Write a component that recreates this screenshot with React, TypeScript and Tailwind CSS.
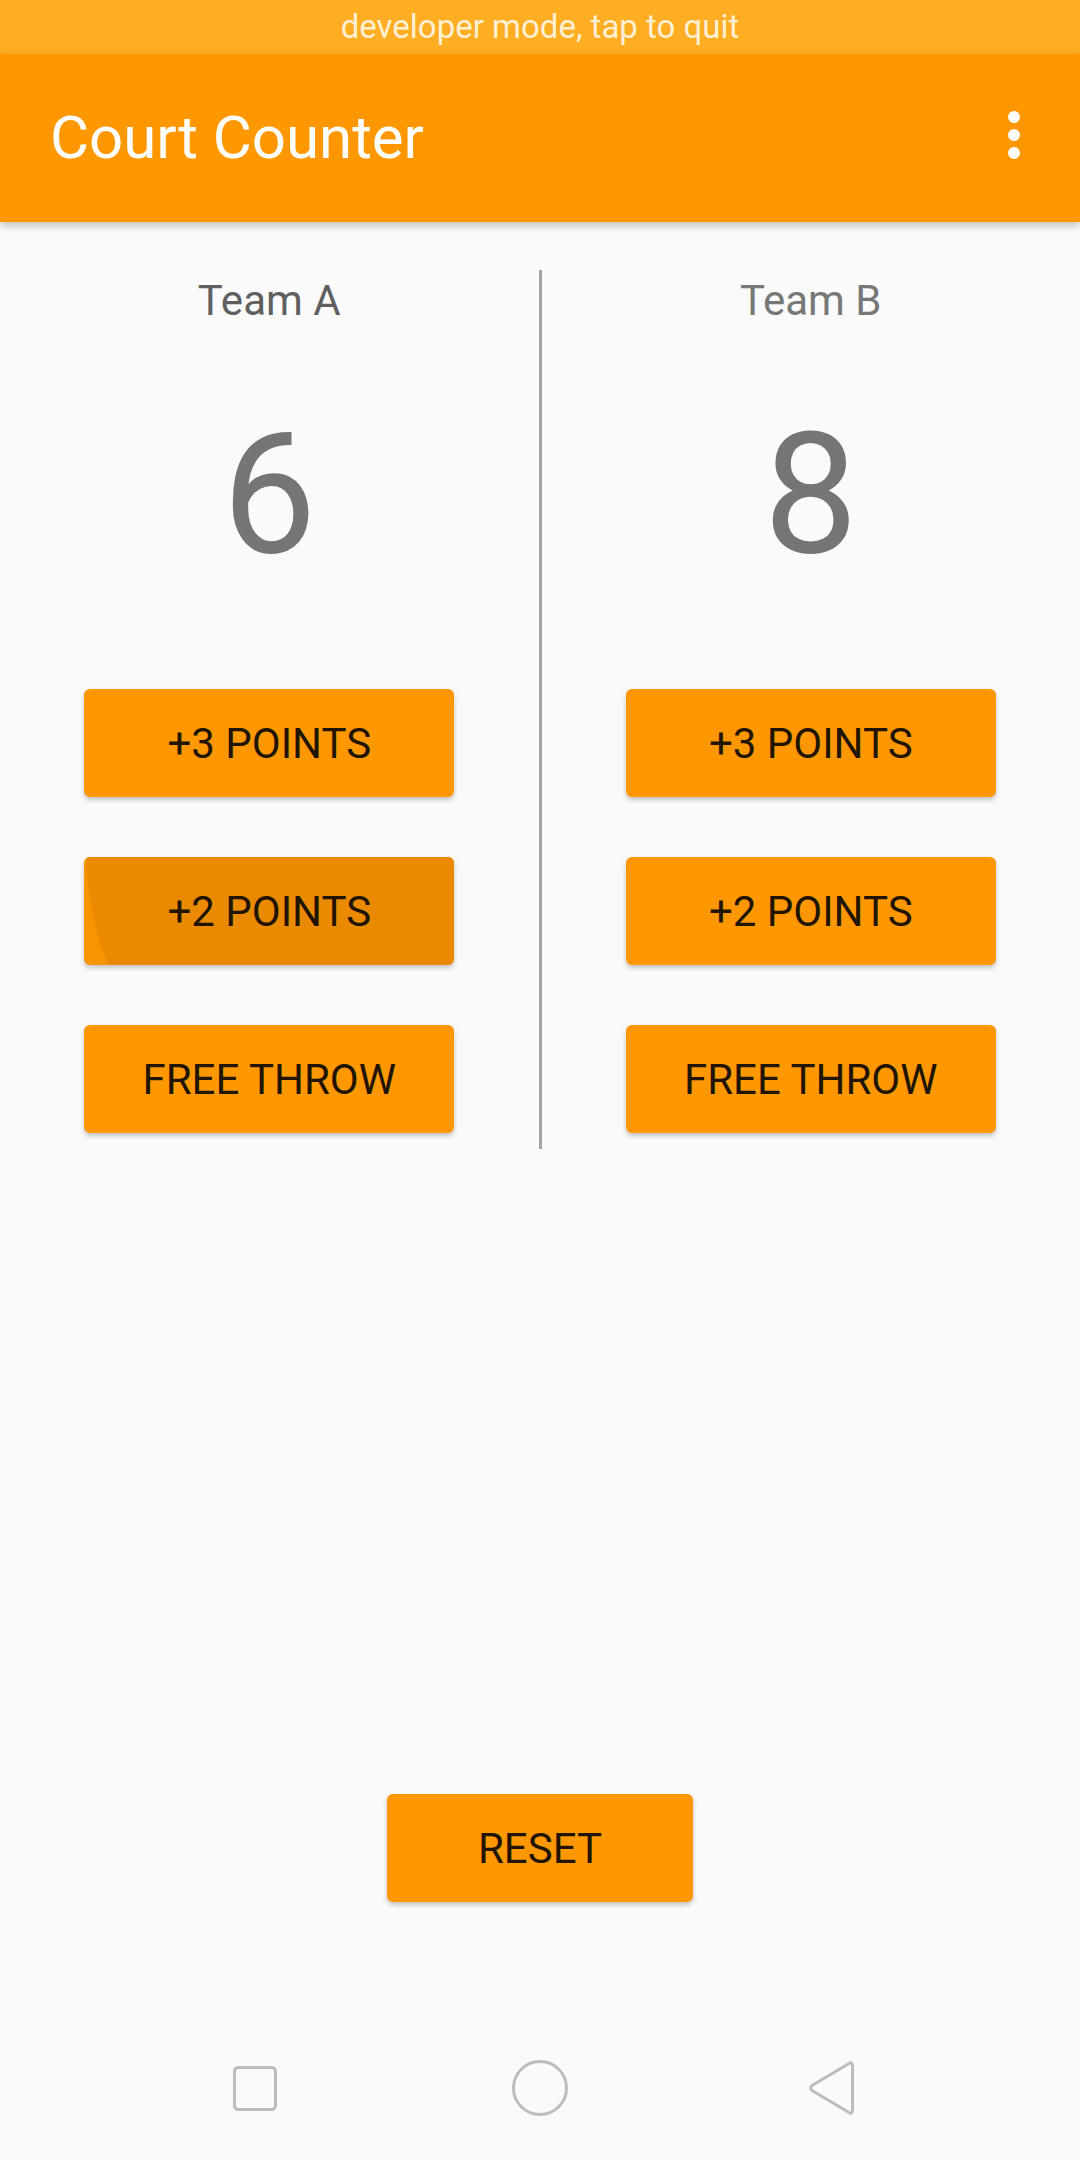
import React from "react";

function ScoreButton({ label, pressed }: { label: string; pressed?: boolean }) {
  return (
    <button
      className={`relative overflow-hidden w-[370px] h-[108px] rounded-[6px] shadow-[0_3px_5px_rgba(0,0,0,0.22)] text-[42px] leading-[49px] text-[#221500] ${
        pressed ? "bg-[#f99401]" : "bg-[#ff9800]"
      }`}
    >
      {/* ripple left over from the tap */}
      {pressed && (
        <span className="absolute left-[2px] top-[-318px] w-[622px] h-[622px] rounded-full bg-[#e98a01]" />
      )}
      <span className="relative">{label}</span>
    </button>
  );
}

function TeamColumn({
  name,
  score,
  nameColor,
  pressedIndex,
}: {
  name: string;
  score: number;
  nameColor: string;
  pressedIndex?: number;
}) {
  const labels = ["+3 POINTS", "+2 POINTS", "FREE THROW"];
  return (
    <div className="flex-1 flex flex-col items-center pt-[6px] pb-[16px]">
      <div className={`text-[42px] leading-[49px] ${nameColor}`}>{name}</div>
      <div className="mt-[72px] text-[168px] leading-[196px] text-[#757575]">{score}</div>
      <div className="mt-[96px] flex flex-col gap-[60px]">
        {labels.map((l, i) => (
          <ScoreButton key={l} label={l} pressed={i === pressedIndex} />
        ))}
      </div>
    </div>
  );
}

export default function App() {
  return (
    <div className="w-[1080px] h-[2160px] bg-[#fafafa] flex flex-col font-['Roboto',sans-serif] overflow-hidden">
      {/* developer mode strip */}
      <div className="h-[54px] bg-[#ffad22] flex items-center justify-center text-[33px] leading-[40px] text-[#fff0d4]">
        developer mode, tap to quit
      </div>

      {/* app bar */}
      <header className="relative z-10 h-[168px] bg-[#ff9800] flex items-center justify-between pl-[50px] pr-[60px] shadow-[0_4px_8px_rgba(0,0,0,0.22)]">
        <h1 className="text-[60px] leading-[70px] text-white">Court Counter</h1>
        <svg width="12" height="48" viewBox="0 0 12 48" className="mt-[-6px]">
          <circle cx="6" cy="6" r="6" fill="#fff" />
          <circle cx="6" cy="24" r="6" fill="#fff" />
          <circle cx="6" cy="42" r="6" fill="#fff" />
        </svg>
      </header>

      <main className="flex-1 flex flex-col">
        <div className="flex mt-[48px]">
          <TeamColumn name="Team A" score={6} nameColor="text-[#5f5f5f]" pressedIndex={1} />
          <div className="w-[3px] bg-[#a4a4a4]" />
          <TeamColumn name="Team B" score={8} nameColor="text-[#777777]" />
        </div>

        <div className="mt-auto mb-[114px] flex justify-center">
          <button className="w-[306px] h-[108px] rounded-[6px] bg-[#ff9800] shadow-[0_3px_5px_rgba(0,0,0,0.22)] text-[42px] leading-[49px] text-[#221500]">
            RESET
          </button>
        </div>
      </main>

      {/* system nav bar */}
      <nav className="h-[144px] flex items-center pl-[233px]">
        <svg width="44" height="45" viewBox="0 0 44 45">
          <rect x="1.5" y="1.5" width="41" height="42" rx="4" fill="none" stroke="#bcbcbc" strokeWidth="3" />
        </svg>
        <svg width="56" height="56" viewBox="0 0 56 56" className="ml-[235px]">
          <circle cx="28" cy="28" r="26.5" fill="none" stroke="#bcbcbc" strokeWidth="3" />
        </svg>
        <svg width="50" height="56" viewBox="0 0 50 56" className="ml-[239px]">
          <path
            d="M42 3.5 Q45 1.5 45.5 5 L45.5 51 Q45 54.5 42 52.5 L5 30.5 Q2.5 28 5 25.5 Z"
            fill="none"
            stroke="#bcbcbc"
            strokeWidth="3"
            strokeLinejoin="round"
          />
        </svg>
      </nav>
    </div>
  );
}
